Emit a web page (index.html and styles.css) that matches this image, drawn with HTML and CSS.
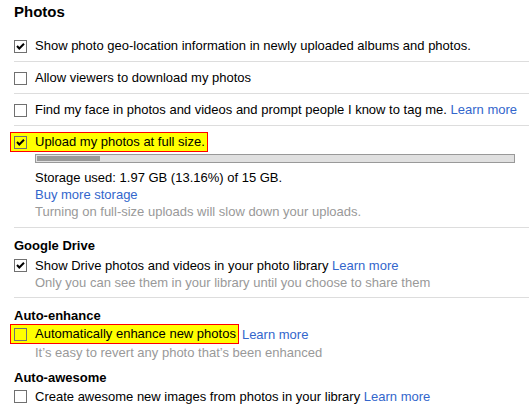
FILE: index.html
```html
<!DOCTYPE html>
<html>
<head>
<meta charset="utf-8">
<link rel="stylesheet" href="styles.css">
</head>
<body>
<div class="page">
  <h2 class="title">Photos</h2>
  <div class="row">
    <div class="opt"><span class="cb"><svg viewBox="0 0 11 11" width="11" height="11"><polyline points="2,5 4.3,7.5 9,2.8" fill="none" stroke="#000" stroke-width="2"/></svg></span><span>Show photo geo-location information in newly uploaded albums and photos.</span></div>
  </div>
  <div class="row">
    <div class="opt"><span class="cb"></span><span>Allow viewers to download my photos</span></div>
  </div>
  <div class="row">
    <div class="opt"><span class="cb"></span><span>Find my face in photos and videos and prompt people I know to tag me. <a class="link" href="#">Learn more</a></span></div>
  </div>
  <div class="upload">
    <div class="hl"><span class="cb"><svg viewBox="0 0 11 11" width="11" height="11"><polyline points="2,5 4.3,7.5 9,2.8" fill="none" stroke="#000" stroke-width="2"/></svg></span><span>Upload my photos at full size.</span></div>
    <div class="bar"><div class="fill" style="width:13.16%"></div></div>
    <div class="info">
      <div>Storage used: 1.97 GB (13.16%) of 15 GB.</div>
      <div><a class="link" href="#">Buy more storage</a></div>
      <div class="note">Turning on full-size uploads will slow down your uploads.</div>
    </div>
  </div>
  <div class="sec">
    <h3 class="head">Google Drive</h3>
    <div class="opt line"><span class="cb"><svg viewBox="0 0 11 11" width="11" height="11"><polyline points="2,5 4.3,7.5 9,2.8" fill="none" stroke="#000" stroke-width="2"/></svg></span><span>Show Drive photos and videos in your photo library <a class="link" href="#">Learn more</a></span></div>
    <div class="note indent">Only you can see them in your library until you choose to share them</div>
  </div>
  <div class="sec plain">
    <h3 class="head">Auto-enhance</h3>
    <div class="hlrow"><div class="hl"><span class="cb"></span><span>Automatically enhance new photos</span></div><a class="link" href="#">Learn more</a></div>
    <div class="note indent">It’s easy to revert any photo that’s been enhanced</div>
  </div>
  <div class="sec plain last">
    <h3 class="head">Auto-awesome</h3>
    <div class="opt line tight"><span class="cb"></span><span>Create awesome new images from photos in your library <a class="link" href="#">Learn more</a></span></div>
  </div>
</div>
</body>
</html>
```
FILE: styles.css
```css
body {
  margin: 0;
  font-family: "Liberation Sans", Arial, sans-serif;
  font-size: 13px;
  color: #000;
  background: #fff;
}
.page {
  padding: 3px 0 0 14px;
}
.title {
  margin: 0 0 9px;
  font-size: 15px;
  line-height: 18px;
  font-weight: bold;
}
.row {
  padding: 8px 0 7px;
  line-height: 16px;
  border-bottom: 1px solid #dddddd;
}
.opt {
  display: flex;
  align-items: center;
  gap: 8px;
}
.cb {
  width: 13px;
  height: 13px;
  box-sizing: border-box;
  border: 1px solid #707070;
  background: #fff;
  flex: none;
  display: flex;
  align-items: center;
  justify-content: center;
}
.link {
  color: #3366cc;
  text-decoration: none;
}
.upload {
  padding: 6px 14px 7px 0;
  border-bottom: 1px solid #dddddd;
}
.hl {
  display: inline-flex;
  align-items: center;
  gap: 8px;
  margin-left: -4px;
  padding: 1px 2px 1px 3px;
  border: 1px solid #ff0000;
  background: #ffff00;
  line-height: 16px;
}
.hl .cb {
  background: transparent;
}
.bar {
  margin: 2px 0 0 21px;
  height: 9px;
  box-sizing: border-box;
  border: 1px solid #999999;
  background: #e0e0e0;
  padding: 1px;
}
.fill {
  height: 5px;
  background: #999999;
}
.info {
  margin: 6px 0 0 21px;
  line-height: 17px;
}
.note {
  color: #999999;
  line-height: 17px;
}
.indent {
  margin-left: 21px;
}
.sec {
  padding: 9px 0 6px;
  border-bottom: 1px solid #dddddd;
}
.sec.plain {
  border-bottom: none;
  padding-bottom: 0;
}
.sec.last {
  padding-top: 8px;
}
.head {
  margin: 0;
  font-size: 13px;
  line-height: 17px;
  font-weight: bold;
}
.line {
  margin-top: 3px;
  line-height: 17px;
}
.line.tight {
  margin-top: 2px;
}
.hlrow {
  display: flex;
  align-items: center;
  gap: 3px;
}
```
